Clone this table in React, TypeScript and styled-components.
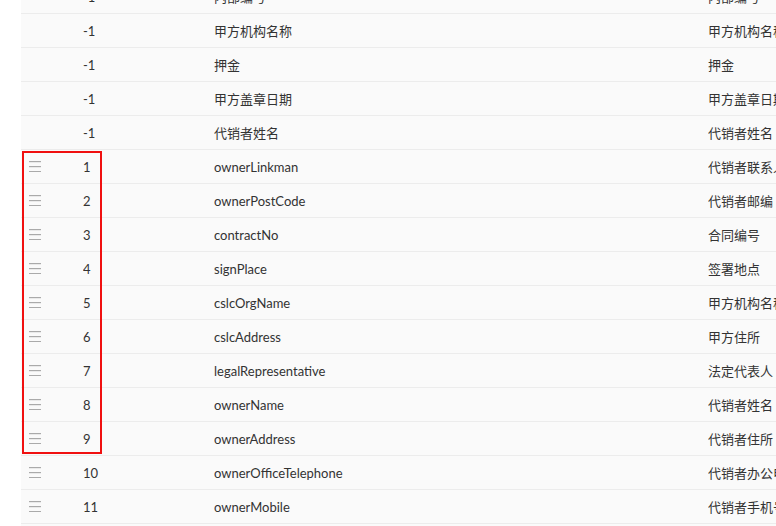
import styled, { createGlobalStyle } from "styled-components";

const GlobalStyle = createGlobalStyle`
  html, body {
    margin: 0;
    padding: 0;
    background: #fff;
    overflow: hidden;
  }
  body {
    font-family: "Lato", "Noto Sans CJK SC", sans-serif;
    font-size: 13px;
    color: #333;
  }
`;

type Field = { index: number; name: string; label: string };

const fields: Field[] = [
  { index: -1, name: "内部编号", label: "内部编号" },
  { index: -1, name: "甲方机构名称", label: "甲方机构名称" },
  { index: -1, name: "押金", label: "押金" },
  { index: -1, name: "甲方盖章日期", label: "甲方盖章日期" },
  { index: -1, name: "代销者姓名", label: "代销者姓名" },
  { index: 1, name: "ownerLinkman", label: "代销者联系人" },
  { index: 2, name: "ownerPostCode", label: "代销者邮编" },
  { index: 3, name: "contractNo", label: "合同编号" },
  { index: 4, name: "signPlace", label: "签署地点" },
  { index: 5, name: "cslcOrgName", label: "甲方机构名称" },
  { index: 6, name: "cslcAddress", label: "甲方住所" },
  { index: 7, name: "legalRepresentative", label: "法定代表人" },
  { index: 8, name: "ownerName", label: "代销者姓名" },
  { index: 9, name: "ownerAddress", label: "代销者住所" },
  { index: 10, name: "ownerOfficeTelephone", label: "代销者办公电话" },
  { index: 11, name: "ownerMobile", label: "代销者手机号" },
  { index: 12, name: "ownerEmail", label: "代销者邮箱" },
];

const ROW_HEIGHT = 34;

const DragHandle = () => (
  <svg width="12" height="11" viewBox="0 0 12 11">
    <rect x="0" y="0" width="12" height="1.2" fill="#aaa" />
    <rect x="0" y="5" width="12" height="1.2" fill="#aaa" />
    <rect x="0" y="10" width="12" height="1.2" fill="#aaa" />
  </svg>
);

export default function App() {
  // rows 5..13 are the highlighted selection
  const selStart = 5;
  const selEnd = 13;

  return (
    <>
      <GlobalStyle />
      <Page>
        <Table>
          {fields.map((f, i) => (
            <Row key={i}>
              <HandleCell>{f.index > 0 && <DragHandle />}</HandleCell>
              <Cell>{f.index}</Cell>
              <Cell>{f.name}</Cell>
              <Cell>{f.label}</Cell>
            </Row>
          ))}
          <Selection
            style={{
              top: selStart * ROW_HEIGHT + 1,
              height: (selEnd - selStart + 1) * ROW_HEIGHT - 3,
            }}
          />
        </Table>
      </Page>
    </>
  );
}

const Page = styled.div`
  width: 776px;
  height: 526px;
  overflow: hidden;
  padding-left: 21px;
  box-sizing: border-box;
`;

const Table = styled.div`
  position: relative;
  width: 900px;
  margin-top: -20px;
  background: #fafafa;
`;

const Row = styled.div`
  display: grid;
  grid-template-columns: 62px 131px 494px 1fr;
  height: ${ROW_HEIGHT}px;
  box-sizing: border-box;
  border-bottom: 1px solid #ececec;
  align-items: center;
`;

const Cell = styled.div`
  white-space: nowrap;
  overflow: hidden;
  line-height: 18px;
`;

const HandleCell = styled.div`
  display: flex;
  align-items: center;
  padding-left: 8px;
`;

const Selection = styled.div`
  position: absolute;
  left: 1px;
  width: 80px;
  box-sizing: border-box;
  border: 2px solid #f01010;
  pointer-events: none;
`;
